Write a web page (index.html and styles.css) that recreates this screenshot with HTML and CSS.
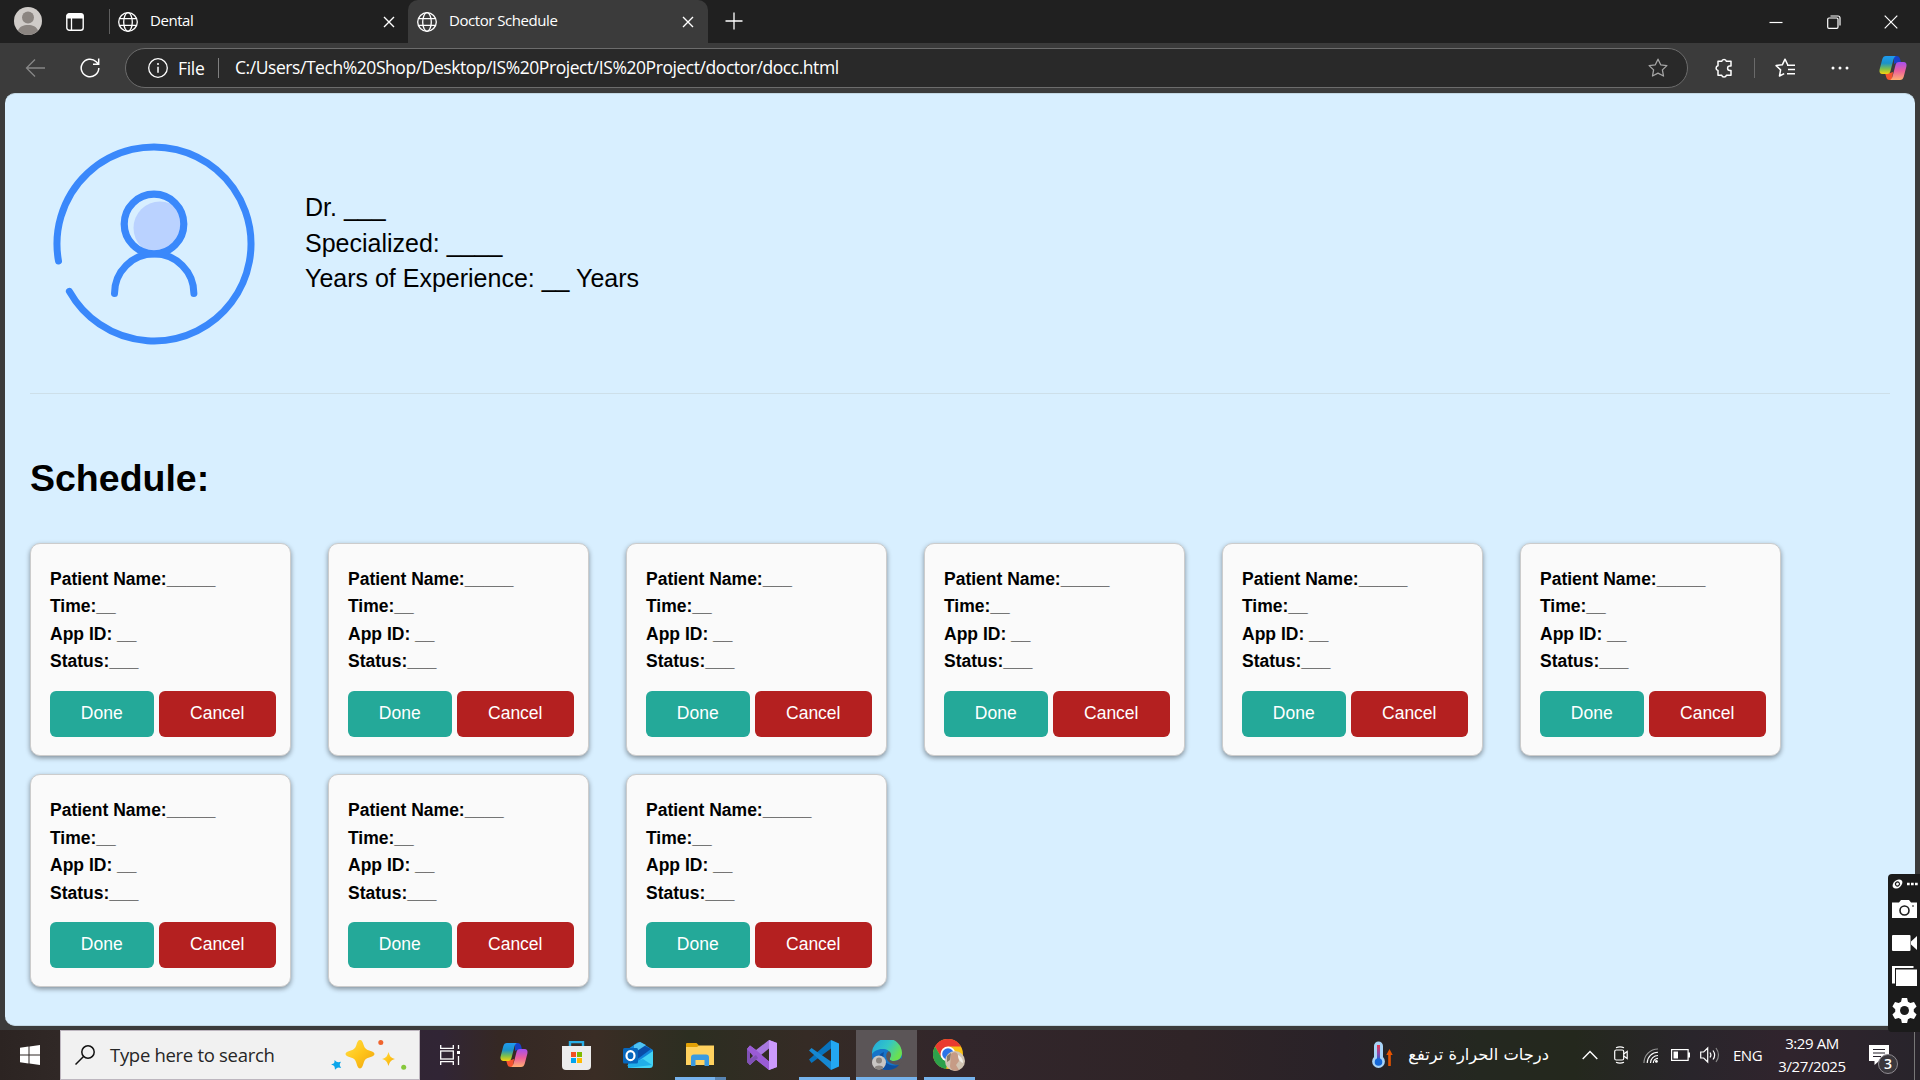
FILE: index.html
```html
<!DOCTYPE html>
<html lang="en">
<head>
<meta charset="utf-8">
<title>Doctor Schedule</title>
<link rel="stylesheet" href="styles.css">
</head>
<body>
<svg class="defs" width="0" height="0">
  <defs>
    <linearGradient id="cpA" x1="0" y1="0" x2="0" y2="1"><stop offset="0" stop-color="#1f9bf0"/><stop offset=".4" stop-color="#1b93c9"/><stop offset=".72" stop-color="#7fc04b"/><stop offset="1" stop-color="#f7d20d"/></linearGradient>
    <linearGradient id="cpB" x1="0" y1="0" x2="0" y2="1"><stop offset="0" stop-color="#a44ff0"/><stop offset=".5" stop-color="#ec5f9b"/><stop offset="1" stop-color="#ffb072"/></linearGradient>
    <linearGradient id="gold" x1="0" y1="0" x2="1" y2="1"><stop offset="0" stop-color="#ffe04a"/><stop offset=".5" stop-color="#ffc51a"/><stop offset="1" stop-color="#eda312"/></linearGradient>
    <linearGradient id="edgeTop" x1="0" y1="0" x2="1" y2=".5"><stop offset="0" stop-color="#1fa6e0"/><stop offset=".55" stop-color="#34c6c6"/><stop offset="1" stop-color="#6be04f"/></linearGradient>
    <linearGradient id="thermo" x1="0" y1="0" x2="0" y2="1"><stop offset="0" stop-color="#e8364f"/><stop offset=".55" stop-color="#8a4bb0"/><stop offset="1" stop-color="#1668d8"/></linearGradient>
    <clipPath id="headClip"><circle cx="101" cy="81" r="30.5"/></clipPath>
    <symbol id="globe" viewBox="0 0 20 20"><g fill="none" stroke="#fff" stroke-width="1.3"><circle cx="10" cy="10" r="9.3"/><ellipse cx="10" cy="10" rx="4.3" ry="9.3"/><path d="M1.6 6.6h16.8M1.6 13.4h16.8"/></g></symbol>
    <symbol id="cross" viewBox="0 0 12 12"><path d="M1 1l10 10M11 1L1 11" stroke="#fff" stroke-width="1.4" fill="none"/></symbol>
    <symbol id="copilot" viewBox="0 0 28 26">
      <path d="M15 1h2.5c2 0 3 1 3.6 3l1 4h-5L15 9z" fill="#1741c8"/>
      <path d="M13 25h-2.500c-2 0-2.700-1-3.300-3L6 18h5l3-1z" fill="#f4542f"/>
      <path d="M7 1h10c-1.400.6-2.100 1.800-2.700 4L11.500 16c-.5 2-1.500 3-3.500 3H3.500C1 19 0 17 .6 14.500L3.200 4.500C3.900 2 5 1 7 1z" fill="url(#cpA)"/>
      <path d="M21 25H11c1.400-.6 2.100-1.800 2.700-4L16.500 10c.5-2 1.500-3 3.500-3h4.500C27 7 28 9 27.400 11.500L24.800 21.500C24.100 24 23 25 21 25z" fill="url(#cpB)"/>
    </symbol>
  </defs>
</svg>
<div class="browser">
  <div class="tabstrip">
    <svg class="profile" viewBox="0 0 28 28"><circle cx="14" cy="14" r="14" fill="#cfcbc8"/><circle cx="14" cy="10.500" r="6" fill="#8b8581"/><path d="M4 23.700C5.500 19.500 9.300 18 14 18s8.500 1.500 10 5.700A14 14 0 0 1 4 23.700z" fill="#8b8581"/></svg>
    <svg class="tab-actions" viewBox="0 0 18 18"><path d="M3 .5h12a2.500 2.500 0 0 1 2.500 2.500v2.500H.5V3A2.500 2.500 0 0 1 3 .5z" fill="#fff"/><rect x=".8" y=".8" width="16.400" height="16.400" rx="2.500" fill="none" stroke="#fff" stroke-width="1.400"/><path d="M5.500 5v12" stroke="#fff" stroke-width="1.300"/></svg>
    <span class="strip-line"></span>
    <div class="tab tab-idle"><svg class="globe"><use href="#globe"/></svg><span class="tab-title">Dental</span><svg class="tab-close"><use href="#cross"/></svg></div>
    <div class="tab tab-active"><svg class="globe"><use href="#globe"/></svg><span class="tab-title">Doctor Schedule</span><svg class="tab-close"><use href="#cross"/></svg></div>
    <svg class="new-tab" viewBox="0 0 18 18"><path d="M9 .5v17M.5 9h17" stroke="#fff" stroke-width="1.300"/></svg>
    <div class="window-buttons">
      <span><svg width="14" height="14"><path d="M.5 7.500h13" stroke="#fff" stroke-width="1.200"/></svg></span>
      <span><svg width="14" height="14" fill="none" stroke="#fff" stroke-width="1.200"><rect x=".7" y="3" width="10.300" height="10.300" rx="1.300"/><path d="M3.500 1h7.500a2 2 0 0 1 2 2v7.500"/></svg></span>
      <span><svg width="14" height="14"><path d="M.7.7l12.600 12.600M13.300.7L.7 13.300" stroke="#fff" stroke-width="1.200"/></svg></span>
    </div>
  </div>
  <div class="toolbar">
    <svg class="back" viewBox="0 0 20 20"><path d="M10 1.500L1.500 10l8.500 8.500M1.500 10H20" fill="none" stroke="#868686" stroke-width="1.300"/></svg>
    <svg class="reload" viewBox="0 0 20 20"><path d="M18.800 10a8.800 8.800 0 1 1-2.600-6.300L18.500 6M18.700.5v5.700h-5.700" fill="none" stroke="#fff" stroke-width="1.500"/></svg>
    <div class="address">
      <svg class="info" viewBox="0 0 20 20"><circle cx="10" cy="10" r="9.300" fill="none" stroke="#fff" stroke-width="1.300"/><path d="M10 8.700v6" stroke="#fff" stroke-width="1.500"/><circle cx="10" cy="6" r="1" fill="#fff"/></svg>
      <span class="scheme">File</span>
      <span class="address-line"></span>
      <span class="url">C:/Users/Tech%20Shop/Desktop/IS%20Project/IS%20Project/doctor/docc.html</span>
      <svg class="star" viewBox="0 0 20 20"><path d="M10 1.200l2.700 5.600 6.200.8-4.500 4.300 1.100 6.100L10 15.100 4.500 18l1.100-6.100L1.100 7.600l6.200-.8z" fill="none" stroke="#a5a5a5" stroke-width="1.300" stroke-linejoin="round"/></svg>
    </div>
    <svg class="puzzle" viewBox="0 0 20 20"><path d="M4 3.300h3.700a2.400 2.400 0 0 1 4.700 0H17v4.800h-1.200a2.200 2.200 0 0 0 0 4.400H17v4.700h-4.600a2.400 2.400 0 0 1-4.700 0H4v-4.700a2.400 2.400 0 0 1 0-4.700z" fill="none" stroke="#fff" stroke-width="1.500" stroke-linejoin="round"/></svg>
    <span class="toolbar-line"></span>
    <svg class="favorites" viewBox="0 0 20 20"><path d="M12.800 7L10 1.200 7.300 6.800l-6.200.8 4.500 4.300L4.500 18l4.700-2.300M12 7.300h8M13 11.500h7M12 15.700h8" fill="none" stroke="#fff" stroke-width="1.500" stroke-linejoin="round"/></svg>
    <svg class="more" viewBox="0 0 18 4" fill="#fff"><circle cx="2" cy="2" r="1.500"/><circle cx="9" cy="2" r="1.500"/><circle cx="16" cy="2" r="1.500"/></svg>
    <svg class="copilot"><use href="#copilot"/></svg>
  </div>
  <main class="page">
    <header class="doctor">
      <svg class="portrait" viewBox="0 0 202 202">
        <g fill="none" stroke="#3a88fb" stroke-width="7" stroke-linecap="round">
          <path d="M5.500 118A97 97 0 1 1 16.400 148.400"/>
          <path d="M61.500 150.500a39.700 39.700 0 0 1 79.400 0"/>
        </g>
        <circle cx="107" cy="85" r="26.500" fill="#bad2ff" clip-path="url(#headClip)"/>
        <circle cx="101" cy="81" r="29.800" fill="none" stroke="#3a88fb" stroke-width="7.200"/>
      </svg>
      <div class="doctor-info"><p>Dr. ___</p><p>Specialized: ____</p><p>Years of Experience: __ Years</p></div>
    </header>
    <hr class="rule">
    <h1>Schedule:</h1>
    <section class="cards">
      <article class="card"><p>Patient Name:_____</p><p>Time:__</p><p>App ID: __</p><p>Status:___</p><div class="actions"><button class="done">Done</button><button class="cancel">Cancel</button></div></article>
      <article class="card"><p>Patient Name:_____</p><p>Time:__</p><p>App ID: __</p><p>Status:___</p><div class="actions"><button class="done">Done</button><button class="cancel">Cancel</button></div></article>
      <article class="card"><p>Patient Name:___</p><p>Time:__</p><p>App ID: __</p><p>Status:___</p><div class="actions"><button class="done">Done</button><button class="cancel">Cancel</button></div></article>
      <article class="card"><p>Patient Name:_____</p><p>Time:__</p><p>App ID: __</p><p>Status:___</p><div class="actions"><button class="done">Done</button><button class="cancel">Cancel</button></div></article>
      <article class="card"><p>Patient Name:_____</p><p>Time:__</p><p>App ID: __</p><p>Status:___</p><div class="actions"><button class="done">Done</button><button class="cancel">Cancel</button></div></article>
      <article class="card"><p>Patient Name:_____</p><p>Time:__</p><p>App ID: __</p><p>Status:___</p><div class="actions"><button class="done">Done</button><button class="cancel">Cancel</button></div></article>
      <article class="card"><p>Patient Name:_____</p><p>Time:__</p><p>App ID: __</p><p>Status:___</p><div class="actions"><button class="done">Done</button><button class="cancel">Cancel</button></div></article>
      <article class="card"><p>Patient Name:____</p><p>Time:__</p><p>App ID: __</p><p>Status:___</p><div class="actions"><button class="done">Done</button><button class="cancel">Cancel</button></div></article>
      <article class="card"><p>Patient Name:_____</p><p>Time:__</p><p>App ID: __</p><p>Status:___</p><div class="actions"><button class="done">Done</button><button class="cancel">Cancel</button></div></article>
    </section>
  </main>
</div>

<footer class="taskbar">
  <div class="start"><svg width="20" height="20" viewBox="0 0 20 20" fill="#fff"><path d="M0 2.800L8.500 1.600V9.500H0zM9.500 1.450L20 0v9.500H9.500zM0 10.500h8.500v7.900L0 17.200zM9.500 10.500H20V20L9.500 18.550z"/></svg></div>
  <div class="search">
    <svg class="lens" viewBox="0 0 20 20"><circle cx="13" cy="7" r="6.200" fill="none" stroke="#111" stroke-width="1.500"/><path d="M8.500 11.500L.5 19.500" stroke="#111" stroke-width="1.500"/></svg>
    <span class="search-text">Type here to search</span>
    <svg class="sparkles" viewBox="0 0 76 32">
      <path d="M29 1c2 0 2.700 2 3.700 5.200 1 3 2.200 4.200 5.500 5.200 3.300 1.100 5.300 1.900 5.300 3.600s-2 2.500-5.300 3.600c-3.300 1-4.500 2.200-5.500 5.200C31.700 27 31 29.500 29 29.500S26.300 27 25.300 23.800c-1-3-2.200-4.200-5.500-5.200-3.300-1.100-5.300-1.900-5.300-3.600s2-2.500 5.300-3.600c3.300-1 4.500-2.200 5.500-5.200C26.300 3 27 1 29 1z" fill="url(#gold)"/>
      <path d="M57.500 13c1.400 4.500 2 5.500 6.500 7-4.500 1.500-5.100 2.500-6.500 7-1.400-4.500-2-5.500-6.500-7 4.500-1.500 5.100-2.500 6.500-7z" fill="url(#gold)"/>
      <path d="M3.500 21c2.500 2.300 3 2.500 6.500 1.700-1.700 3-1.500 3.500.2 6.300-3.200-1-3.700-.8-6.200 1.700-.2-3.500-.6-3.900-3.800-5.200 3-1.100 3.500-1.500 3.300-4.500z" fill="#0aa5ea"/>
      <circle cx="49.800" cy="3.500" r="2.500" fill="#f0642d"/><circle cx="72.700" cy="28.200" r="2.500" fill="#86c83c"/>
    </svg>
  </div>
  <div class="task task-view"><svg width="20" height="20" fill="none" stroke="#fff" stroke-width="1.300"><path d="M.7 0v3.300h12.600V0M.7 20v-3.300h12.600V20M18.500 0v4M18.500 11v9"/><rect x=".7" y="6" width="12.600" height="8"/><path d="M17 7.500h3" stroke-width="3"/></svg></div>
  <div class="task"><svg width="28" height="26"><use href="#copilot"/></svg></div>
  <div class="task"><svg width="29" height="29" viewBox="0 0 29 29"><path d="M8 6V1h13v5" fill="none" stroke="#28aee6" stroke-width="2.400"/><path d="M0 5h29v20a4 4 0 0 1-4 4H4a4 4 0 0 1-4-4z" fill="#ececec"/><path fill="#f25022" d="M9 11h5v5H9z"/><path fill="#7fba00" d="M15 11h5v5h-5z"/><path fill="#00a4ef" d="M9 17h5v5H9z"/><path fill="#ffb900" d="M15 17h5v5h-5z"/></svg></div>
  <div class="task"><svg width="30" height="26" viewBox="0 0 30 26"><path d="M5 7L14 .8c1.500-1 3-1 4.500 0L30 8v14L10 26H5z" fill="#1185dc"/><path d="M16 1l12 6-16 12V9z" fill="#0a4da8"/><path d="M11 3l6-3 6 3-12 8z" fill="#4ec2f2"/><path d="M30 9v13.500a3.500 3.500 0 0 1-3.500 3.500H8a3.500 3.500 0 0 1-3.500-3L14 20z" fill="#43d3f5"/><path d="M5 26l24-3-9-6-15 5z" fill="#21aee8"/><rect y="6" width="15" height="15.500" rx="1.500" fill="#0767bd"/><ellipse cx="7.500" cy="13.700" rx="4" ry="4.500" fill="none" stroke="#fff" stroke-width="2.200"/></svg></div>
  <div class="task open explorer"><svg width="28" height="24" viewBox="0 0 28 24"><path d="M0 1a1 1 0 0 1 1-1h9.500l2.500 2.500V8H0z" fill="#e2a106"/><path d="M0 4h11l2-1.500h15V22H0z" fill="#ffd25f"/><path d="M5 23V14.500a3 3 0 0 1 3-3h12a3 3 0 0 1 3 3V23h-4.500v-6h-9v6z" fill="#3b9be0"/></svg></div>
  <div class="task"><svg width="30" height="30" viewBox="0 0 30 30"><path d="M0 9l3-3.500L9 10l13-10 8 3v24l-8 3L9 19.500 3 25l-3-3zM3 12v7l4-4zM22 8.500L14 15l8 6.500z" fill="#a878e0" fill-rule="evenodd"/><path d="M22 0l8 3v24l-8 3z" fill="#cb9afc"/><path d="M3 5.500L9 10l13 11.500V30L9 19.500 0 9z" fill="#9a5bd5"/><path d="M0 9l3 3v7l6-4 2 3-8 7-3-3z" fill="#8051b5"/></svg></div>
  <div class="task open"><svg width="30" height="30" viewBox="0 0 30 30"><path d="M0 19.500L2.500 23 22 8.500V0L0 19.500z" fill="#0873bd"/><path d="M2.500 8L22 21.500V30L0 10.500z" fill="#1688d2"/><path d="M22 0l8 3.500v23L22 30z" fill="#23a7f2"/></svg></div>
  <div class="task open selected"><svg width="30" height="30" viewBox="0 0 30 30"><circle cx="15" cy="15" r="15" fill="#1674c9"/><path d="M0 14A15 15 0 0 1 30 13c0 5-4 8-8 8-3 0-5-1-4-3 1.500-4-.5-8.500-6-9C6 8.500 2 11 0 14z" fill="url(#edgeTop)"/><path d="M18 18c-1 2 1 3 4 3 3 0 5-1 7-3l2 3-3.500 3.500c-5 1-11-1-13-6-1-4 1-8 3-7 2 2 2 4 .500 6.500z" fill="#5b5557"/><path d="M12 12c-3 9 4 15 15 13-3 4-8 5-12 5C8 30 4 23 6 18c1-3 3-5 6-6z" fill="#0e4fa0"/><circle cx="7" cy="22.500" r="7" fill="#c9c6c4"/><circle cx="7" cy="20.500" r="3" fill="#8b8581"/><path d="M2.500 27.800c1-3 8-3 9 0a7 7 0 0 1-9 0z" fill="#8b8581"/></svg></div>
  <div class="task open"><svg width="32" height="32" viewBox="0 0 32 32"><circle cx="15" cy="15" r="15" fill="#fbc116"/><path d="M2 7.500A15 15 0 0 1 28 7.500H15L8.500 18.700z" fill="#ea3b30"/><path d="M2 7.500L8.500 18.700 15 22.500 13 30A15 15 0 0 1 2 7.500z" fill="#2da14b"/><circle cx="15" cy="15" r="7.500" fill="#fff"/><circle cx="15" cy="15" r="5.800" fill="#2d73e8"/><circle cx="22" cy="22" r="10" fill="#d1c4b3"/><path d="M18 15c3-3 7-2 7 2l1 5-3 4 3 5c-6 2-9-1-9-4z" fill="#c69b85"/><path d="M25 16c4 2 5 5 5 8-3-1-5-4-5-8z" fill="#f1eee8"/><path d="M14 17l4-3-1 7-3 2z" fill="#887867"/></svg></div>
  <div class="tray">
    <svg class="thermometer" viewBox="0 0 21 29"><path d="M2 5a4.500 4.500 0 0 1 9 0V16a6.400 6.400 0 1 1-9 0z" fill="#a9d4f7"/><rect x="5" y="4" width="3" height="16" fill="url(#thermo)"/><circle cx="6.500" cy="21" r="3.800" fill="#1668d8"/><path d="M17.500 8l3.200 6h-1.900v11h-2.600V14h-1.900z" fill="#e55300"/></svg>
    <span class="weather" lang="ar" dir="rtl">درجات الحرارة ترتفع</span>
    <svg class="chevron" viewBox="0 0 16 10"><path d="M.7 9L8 1.500 15.300 9" fill="none" stroke="#fff" stroke-width="1.400"/></svg>
    <svg class="meet" viewBox="0 0 14 18" fill="none" stroke="#fff" stroke-width="1.200"><rect x=".7" y="4" width="9" height="10" rx="1.500"/><path d="M9.700 8l3.500-2.500v7L9.700 10M2 1.700Q6 0 10 1.700M2 16.300Q6 18 10 16.300"/></svg>
    <svg class="wifi" viewBox="0 0 16 16" fill="none" stroke-width="1.200"><path d="M1 16A15 15 0 0 1 16 1" stroke="#999"/><path d="M4.500 16A11.500 11.500 0 0 1 16 4.500M8 16a8 8 0 0 1 8-8M11 16a5 5 0 0 1 5-5" stroke="#fff"/><circle cx="14.300" cy="14.300" r="1.500" fill="#fff"/></svg>
    <svg class="battery" viewBox="0 0 19 12"><rect x=".6" y=".6" width="16.500" height="10.800" fill="none" stroke="#fff" stroke-width="1.200"/><path d="M2.500 2.500H7v7H2.500zM17 3.500h2v5h-2z" fill="#fff"/></svg>
    <svg class="volume" viewBox="0 0 20 18" fill="none" stroke="#fff" stroke-width="1.200"><path d="M.7 6h3l4-4v14l-4-4h-3zM10 6.500q1.800 2.500 0 5M13 4.500q3.300 4.500 0 9"/><path d="M16 2q5 7 0 14" stroke="#888"/></svg>
    <span class="lang">ENG</span>
    <div class="clock"><span>3:29 AM</span><span>3/27/2025</span></div>
    <div class="notify"><svg width="20" height="20" viewBox="0 0 20 20"><path d="M0 0h20v16H10l-4.500 4v-4H0z" fill="#fff"/><path d="M4 4.500h12M4 8h12M4 11.500h8" stroke="#25202a" stroke-width="1.200"/></svg><span class="count">3</span></div>
    <span class="desktop-edge"></span>
  </div>
</footer>

<aside class="capture">
  <svg class="capture-head" viewBox="0 0 26 10"><g transform="rotate(-40 5.500 5)"><ellipse cx="5.500" cy="5" rx="5.500" ry="3.800" fill="#fff"/><circle cx="5.500" cy="5" r="2" fill="none" stroke="#1b1b1b" stroke-width="1.100"/></g><path d="M15 3.700h2.700v2.500H15zM19 3.700h2.700v2.500H19zM23 3.700h2.700v2.500H23z" fill="#fff"/></svg>
  <svg class="cap-camera" viewBox="0 0 25 18"><path d="M0 2.500h7L9 0h8l2 2.500h6V18H0z" fill="#fff"/><circle cx="12.500" cy="10.500" r="4.500" fill="none" stroke="#1b1b1b" stroke-width="1.600"/><path d="M20 6h2" stroke="#1b1b1b"/></svg>
  <svg class="cap-video" viewBox="0 0 25 16"><rect width="18.500" height="16" rx="1" fill="#fff"/><path d="M19 6.500L25 1v14l-6-5.500z" fill="#fff"/></svg>
  <svg class="cap-window" viewBox="0 0 25 20"><path d="M0 0h21.500v2H3v15.500H0z" fill="#fff"/><rect x="4" y="3.500" width="21" height="16.500" fill="#fff"/></svg>
  <svg class="cap-gear" viewBox="0 0 24 24"><path d="M9.500 0h5l.8 3.600 2.300 1.300 3.500-1.100 2.500 4.300L20.900 10.700v2.600l2.700 2.600-2.500 4.300-3.500-1.100-2.300 1.300-.8 3.600h-5l-.8-3.600-2.300-1.300-3.500 1.100L.4 15.900l2.700-2.600v-2.600L.4 8.100l2.500-4.300 3.500 1.100 2.300-1.300z" fill="#fff"/><circle cx="12" cy="12" r="4.300" fill="#1b1b1b"/></svg>
</aside>
</body>
</html>
```
FILE: styles.css
```css
* { box-sizing: border-box; }
body { margin: 0; width: 1920px; height: 1080px; overflow: hidden; background: #3b3b3b; font-family: "Open Sans", "Noto Sans", sans-serif; color: #fff; }
.defs { position: absolute; }
svg { display: block; flex: none; }
p, h1 { margin: 0; }
.browser { height: 1030px; display: flex; flex-direction: column; }

.tabstrip { height: 43px; flex: none; display: flex; align-items: center; background: #202020; }
.profile { width: 28px; height: 28px; margin: 0 24px 1px 14px; }
.tab-actions { width: 18px; height: 18px; margin-right: 25px; }
.strip-line { width: 1px; height: 25px; background: #5f5f5f; }
.tab { height: 43px; display: flex; align-items: center; font-size: 15px; }
.tab-idle { width: 298px; padding-left: 8px; padding-right: 13px; }
.tab-active { width: 300px; padding-left: 9px; padding-right: 14px; background: #3b3b3b; border-radius: 10px 10px 0 0; }
.globe { width: 20px; height: 20px; margin-right: 12px; }
.tab-title { flex: 1; letter-spacing: -0.45px; line-height: 20px; padding-bottom: 4px; }
.tab-close { width: 12px; height: 12px; }
.new-tab { width: 18px; height: 18px; margin: 0 0 2px 17px; }
.window-buttons { margin-left: auto; display: flex; }
.window-buttons span { width: 57.5px; display: flex; justify-content: center; }

.toolbar { height: 50px; flex: none; display: flex; align-items: center; padding-bottom: 1px; background: #3b3b3b; }
.back { width: 20px; height: 20px; margin: 0 35px 0 25px; }
.reload { width: 20px; height: 20px; margin-right: 25px; }
.address { width: 1563px; height: 40px; margin-top: 1px; display: flex; align-items: center; padding-left: 22px; background: #292929; border: 1px solid #6c6c6c; border-radius: 20px; font-size: 17.5px; }
.info { width: 20px; height: 20px; }
.scheme { width: 40px; margin-left: 10px; letter-spacing: -0.3px; }
.address-line { width: 1px; height: 20px; background: #808080; margin-right: 16px; }
.url { letter-spacing: -0.44px; padding-bottom: 2px; white-space: nowrap; }
.star { width: 20px; height: 20px; margin-left: auto; margin-right: 19px; }
.puzzle { width: 20px; height: 20px; margin-left: 26px; }
.toolbar-line { width: 1px; height: 20px; background: #6a6a6a; margin: 0 20px; }
.favorites { width: 20px; height: 20px; }
.more { width: 18px; height: 4px; margin: 0 30px 0 36px; }
.copilot { width: 28px; height: 26px; }

.page { width: 1910px; height: 933px; margin-left: 5px; padding: 0 25px; background: #d8efff; border: 1px solid #c3d8e4; border-width: 1px 0; border-radius: 10px; color: #000; font-family: "Liberation Sans", Arial, sans-serif; }
.doctor { height: 299px; display: flex; align-items: center; padding: 1px 0 0 23px; }
.portrait { width: 202px; height: 202px; overflow: visible; }
.doctor-info { margin-left: 50px; padding-bottom: 1px; font-size: 25px; line-height: 35.500px; }
.rule { height: 1px; margin: 0; border: 0; background: #cddfe9; }
.page h1 { margin: 63px 0 43px; font-size: 37.500px; line-height: 43px; }
.cards { display: grid; grid-template-columns: repeat(6, 261px); grid-auto-rows: 213px; gap: 18.400px 37px; }
.card { padding: 22px 14px 0 19px; background: #fafafa; border: 1px solid #ccc; border-radius: 10px; box-shadow: 0 2px 5px rgba(0, 0, 0, .4); font-size: 17.500px; font-weight: bold; line-height: 27.400px; }
.actions { display: flex; gap: 5px; margin-top: 15px; }
.actions button { height: 46px; padding: 0 0 1px; border: 0; border-radius: 6px; color: #fff; font: 17.500px "Liberation Sans", Arial, sans-serif; }
.done { width: 104px; background: #24a999; }
.cancel { width: 118px; background: #b42020; }

.taskbar { height: 50px; display: flex; background: linear-gradient(90deg, #2c2422 0, #302826 3%, #312535 23%, #352824 26%, #3a2d25 31%, #2c2e21 36%, #352b25 42%, #32262b 50%, #2f2427 62%, #292228 70%, #242820 77%, #24281d 82%, #29252b 88%, #30242d 93%, #28242b 100%); }
.start { width: 60px; display: flex; align-items: center; justify-content: center; }
.search { width: 360px; display: flex; align-items: center; padding: 0 12px 0 14px; color: #262626; background: #f1f1f1; border: 1px solid #bdb6bf; }
.lens { width: 20px; height: 20px; margin-right: 15px; }
.search-text { font-size: 18.500px; letter-spacing: -0.300px; padding-bottom: 1px; }
.sparkles { width: 76px; height: 32px; margin-left: auto; }
.task { width: 62px; flex: none; display: flex; align-items: center; justify-content: center; }
.task-view { margin: 0 2px 0 -1px; }
.open { background: linear-gradient(#76b3ec, #76b3ec) 6px 47px / 51px 3px no-repeat; }
.explorer { background: linear-gradient(90deg, #76b3ec 78%, #5885b2 78%) 6px 47px / 51px 3px no-repeat; }
.selected { background: linear-gradient(#76b3ec, #76b3ec) 0 47px / 61px 3px no-repeat, #5b5557; width: 61px; margin: 0 1px; }
.tray { margin-left: auto; display: flex; align-items: center; font-size: 15px; }
.thermometer { width: 21px; height: 29px; }
.weather { width: 143px; margin: 0 33px 2px 13px; font-size: 16.300px; white-space: nowrap; font-family: "DejaVu Sans", sans-serif; }
.chevron { width: 16px; height: 10px; }
.meet { width: 14px; height: 18px; margin-left: 16px; }
.wifi { width: 15px; height: 15px; margin-left: 15px; }
.battery { width: 19px; height: 12px; margin-left: 13px; }
.volume { width: 20px; height: 18px; margin-left: 10px; }
.lang { width: 30px; margin-left: 13px; letter-spacing: -0.500px; }
.clock { width: 80px; margin-left: 9px; display: flex; flex-direction: column; text-align: center; line-height: 23px; letter-spacing: -0.400px; }
.notify { position: relative; margin-left: 17px; }
.count { position: absolute; left: 9px; top: 9px; width: 20px; height: 20px; border: 1px solid #8f8b91; border-radius: 50%; background: #3b383d; font-size: 14px; font-weight: 600; line-height: 18px; text-align: center; }
.desktop-edge { width: 1px; height: 50px; margin: 0 5px 0 25px; background: #777; }

.capture { position: absolute; left: 1888px; top: 874px; width: 32px; height: 158px; padding: 5px 0 0 4px; background: #1b1b1b; border-radius: 4px 0 0 4px; }
.capture-head { width: 26px; height: 10px; }
.cap-camera { width: 25px; height: 18px; margin-top: 11px; }
.cap-video { width: 25px; height: 16px; margin-top: 17px; }
.cap-window { width: 25px; height: 20px; margin-top: 15px; }
.cap-gear { width: 25px; height: 25px; margin-top: 12px; }
```
